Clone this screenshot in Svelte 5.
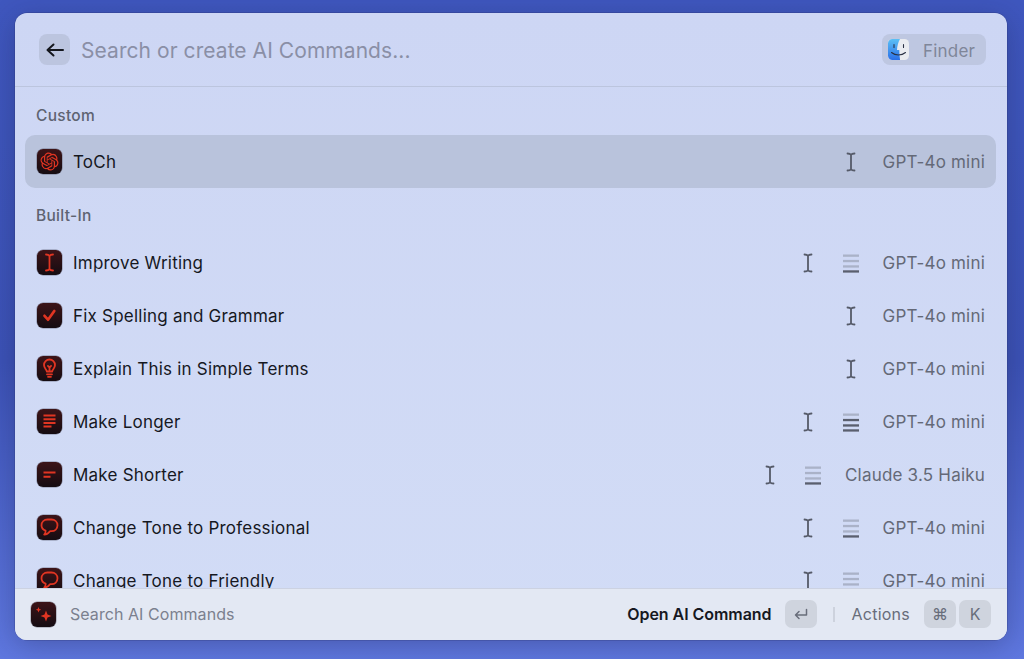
<script lang="ts">
  const custom = [{ title: "ToCh", icon: "openai", input: true, length: "", model: "GPT-4o mini" }];

  const builtIn = [
    { title: "Improve Writing", icon: "cursor", input: true, length: "short", model: "GPT-4o mini" },
    { title: "Fix Spelling and Grammar", icon: "check", input: true, length: "", model: "GPT-4o mini" },
    { title: "Explain This in Simple Terms", icon: "bulb", input: true, length: "", model: "GPT-4o mini" },
    { title: "Make Longer", icon: "long", input: true, length: "long", model: "GPT-4o mini" },
    { title: "Make Shorter", icon: "shorter", input: true, length: "short", model: "Claude 3.5 Haiku" },
    { title: "Change Tone to Professional", icon: "bubble", input: true, length: "short", model: "GPT-4o mini" },
    { title: "Change Tone to Friendly", icon: "bubble", input: true, length: "short", model: "GPT-4o mini" }
  ];

  const openai =
    "M22.2819 9.8211a5.9847 5.9847 0 0 0-.5157-4.9108 6.0462 6.0462 0 0 0-6.5098-2.9A6.0651 6.0651 0 0 0 4.9807 4.1818a5.9847 5.9847 0 0 0-3.9977 2.9 6.0462 6.0462 0 0 0 .7427 7.0966 5.98 5.98 0 0 0 .511 4.9107 6.051 6.051 0 0 0 6.5146 2.9001A5.9847 5.9847 0 0 0 13.2599 24a6.0557 6.0557 0 0 0 5.7718-4.2058 5.9894 5.9894 0 0 0 3.9977-2.9001 6.0557 6.0557 0 0 0-.7475-7.0729zm-9.022 12.6081a4.4755 4.4755 0 0 1-2.8764-1.0408l.1419-.0804 4.7783-2.7582a.7948.7948 0 0 0 .3927-.6813v-6.7369l2.02 1.1686a.071.071 0 0 1 .038.052v5.5826a4.504 4.504 0 0 1-4.4945 4.4944zm-9.6607-4.1254a4.4708 4.4708 0 0 1-.5346-3.0137l.142.0852 4.783 2.7582a.7712.7712 0 0 0 .7806 0l5.8428-3.3685v2.3324a.0804.0804 0 0 1-.0332.0615L9.74 19.9502a4.4992 4.4992 0 0 1-6.1408-1.6464zM2.3408 7.8956a4.485 4.485 0 0 1 2.3655-1.9728V11.6a.7664.7664 0 0 0 .3879.6765l5.8144 3.3543-2.0201 1.1685a.0757.0757 0 0 1-.071 0l-4.8303-2.7865A4.504 4.504 0 0 1 2.3408 7.872zm16.5963 3.8558L13.1038 8.364 15.1192 7.2a.0757.0757 0 0 1 .071 0l4.8303 2.7913a4.4944 4.4944 0 0 1-.6765 8.1042v-5.6772a.79.79 0 0 0-.407-.667zm2.0107-3.0231l-.142-.0852-4.7735-2.7818a.7759.7759 0 0 0-.7854 0L9.409 9.2297V6.8974a.0662.0662 0 0 1 .0284-.0615l4.8303-2.7866a4.4992 4.4992 0 0 1 6.6802 4.66zM8.3065 12.863l-2.02-1.1638a.0804.0804 0 0 1-.038-.0567V6.0742a4.4992 4.4992 0 0 1 7.3757-3.4537l-.142.0805L8.704 5.459a.7948.7948 0 0 0-.3927.6813zm1.0976-2.3654l2.602-1.4998 2.6069 1.4998v2.9994l-2.5974 1.4997-2.6067-1.4997Z";
</script>

{#snippet appIcon(name: string)}
  <span class="app-icon">
    <svg viewBox="0 0 25 25" width="25" height="25">
      {#if name === "openai"}
        <g transform="translate(3.5 3.5) scale(0.75)"><path d={openai} class="fill" /></g>
      {:else if name === "cursor"}
        <path d="M9 4.500c1.500 0 2.800.4 3.500 1.500.7-1.100 2-1.500 3.500-1.500M9 20.500c1.500 0 2.800-.4 3.500-1.500.7 1.100 2 1.500 3.500 1.500M12.500 6v13" class="line bold" />
      {:else if name === "check"}
        <path d="M7.500 12.800l3.500 3.900L17.300 8" class="line heavy" />
      {:else if name === "bulb"}
        <path d="M9.800 15.500c0-2-2.800-3-2.800-6.500a5.500 5.500 0 0 1 11 0c0 3.500-2.800 4.500-2.800 6.500zM10 18.300h5M11 20.800h3M12.500 15.500v-4l-1.600-1.600M12.500 11.500l1.600-1.600" class="line bold" />
      {:else if name === "long"}
        <path d="M6.500 6.500h12M6.500 10.200h12M6.500 13.900h12M6.500 17.600h8" class="line thick" />
      {:else if name === "shorter"}
        <path d="M6.500 10.500h12M6.500 14.800h7" class="line thick" />
      {:else if name === "bubble"}
        <path d="M10.500 4.500h4c3.300 0 6 2.300 6 5.800s-2.700 5.900-6 5.900h-1.500c-1.400 2-3.300 3.200-5.800 3.500 1.100-1.100 1.600-2.500 1.400-4.100C6 14.800 4.500 12.800 4.500 10.300c0-3.500 2.700-5.800 6-5.800z" class="line bold" />
      {:else if name === "sparkle"}
        <path d="M15 8.500l1.500 4 4 1.500-4 1.500-1.500 4-1.500-4-4-1.500 4-1.500zM7.500 5l.8 2 2 .8-2 .8-.8 2-.8-2-2-.8 2-.8z" class="fill" />
      {/if}
    </svg>
  </span>
{/snippet}

{#snippet rowItem(item: (typeof builtIn)[number], selected: boolean)}
  <li class="row" class:selected>
    {@render appIcon(item.icon)}
    <span class="title">{item.title}</span>
    <span class="params">
      {#if item.input}
        <svg class="beam" viewBox="0 0 18 20" width="18" height="20">
          <path d="M5.500 1.500c1.600 0 2.800.3 3.500 1.300.7-1 1.900-1.300 3.500-1.300M5.500 18.500c1.600 0 2.800-.3 3.500-1.300.7 1 1.900 1.300 3.500 1.300M9 3v14" />
        </svg>
      {/if}
      {#if item.length}
        <svg class="bars" class:long={item.length === "long"} viewBox="0 0 18 20" width="18" height="20">
          <rect class="bar" x="1" y="1.500" width="16" height="2.300" />
          <rect class="bar two" x="1" y="6.900" width="16" height="2.300" />
          <rect class="bar three" x="1" y="12.300" width="16" height="2.300" />
          <rect class="bar dark" x="1" y="17.300" width="16" height="2.300" />
        </svg>
      {/if}
    </span>
    <span class="model">{item.model}</span>
  </li>
{/snippet}

<div class="desktop">
  <div class="window">
    <header class="search">
      <button class="back" type="button" aria-label="Back">
        <svg viewBox="0 0 18 18" width="18" height="18">
          <path d="M17 9H1.500M7.500 3.500L1.500 9l6 5.500" />
        </svg>
      </button>
      <span class="placeholder">Search or create AI Commands...</span>
      <span class="context">
        <svg class="finder" viewBox="0 0 21 21" width="21" height="21">
          <defs>
            <linearGradient id="finder-blue" x1="0" y1="0" x2="0" y2="1">
              <stop offset="0" stop-color="#5cc0f5" />
              <stop offset="1" stop-color="#2a6fe8" />
            </linearGradient>
          </defs>
          <rect width="21" height="21" rx="4.500" fill="#e9ebf0" />
          <path d="M4.500 0H12c-1.800 3.300-2.800 6.800-3 11h2.300c0 3.200.2 6.500.8 10H4.500A4.500 4.500 0 0 1 0 16.500v-12A4.500 4.500 0 0 1 4.500 0z" fill="url(#finder-blue)" />
          <path d="M6 5.500v3M15.500 5.500v3" class="face" />
          <path d="M3.500 13.500c4 3.300 10 3.300 14 0" class="face" />
        </svg>
        <span>Finder</span>
      </span>
    </header>

    <div class="list">
      <h2 class="first">Custom</h2>
      <ul>
        {#each custom as item}
          {@render rowItem(item, true)}
        {/each}
      </ul>
      <h2>Built-In</h2>
      <ul>
        {#each builtIn as item}
          {@render rowItem(item, false)}
        {/each}
      </ul>
    </div>

    <footer class="bar-bottom">
      {@render appIcon("sparkle")}
      <span class="hint">Search AI Commands</span>
      <strong>Open AI Command</strong>
      <kbd class="enter">
        <svg viewBox="0 0 16 14" width="16" height="14">
          <path d="M13.500 2.500v5.500H2.500M6 4.500L2.500 8 6 11.500" />
        </svg>
      </kbd>
      <span class="sep"></span>
      <span class="actions">Actions</span>
      <span class="keys">
        <kbd>⌘</kbd>
        <kbd>K</kbd>
      </span>
    </footer>
  </div>
</div>

<style>
  :global(body) { margin: 0; }

  .desktop {
    height: 659px;
    padding: 13px 17px 19px 15px;
    box-sizing: border-box;
    overflow: hidden;
    font-family: Inter, "Noto Sans", sans-serif;
    background: linear-gradient(180deg, #3f57be 0%, #3c52b6 55%, #5f78e0 100%);
  }

  .window {
    height: 627px;
    display: flex;
    flex-direction: column;
    overflow: hidden;
    border-radius: 12px;
    background: linear-gradient(180deg, #cdd6f4 0%, #d2dcf6 100%);
    box-shadow: 0 0 0 0.5px rgba(40, 50, 110, 0.5), 0 6px 28px rgba(25, 30, 70, 0.3);
  }

  .search {
    flex: none;
    height: 73px;
    display: flex;
    align-items: center;
    padding: 0 21px 0 24px;
    border-bottom: 1px solid #bcc5de;
    box-sizing: content-box;
  }
  .back {
    width: 31px;
    height: 31px;
    padding: 0;
    display: grid;
    place-items: center;
    border: 0;
    border-radius: 8px;
    background: #bcc5df;
  }
  .back path {
    fill: none;
    stroke: #14161c;
    stroke-width: 2;
    stroke-linecap: round;
    stroke-linejoin: round;
  }
  .placeholder {
    margin-left: 11px;
    padding-top: 1px;
    flex: 1;
    font-size: 21px;
    letter-spacing: 0.06px;
    color: #8a8fa6;
  }
  .context {
    width: 104px;
    height: 31px;
    box-sizing: border-box;
    padding-left: 6px;
    display: flex;
    align-items: center;
    gap: 14px;
    border-radius: 8px;
    background: #bec7e1;
    font-size: 17px;
    letter-spacing: 0.2px;
    color: #7f8699;
  }
  .context span { padding-top: 2px; }
  .finder { flex: none; }
  .face {
    fill: none;
    stroke: #2a3144;
    stroke-width: 1.100;
    stroke-linecap: round;
  }

  .list {
    flex: 1;
    min-height: 0;
    overflow: hidden;
    padding: 0 11px 0 10px;
  }
  h2 {
    margin: 0;
    height: 48px;
    box-sizing: border-box;
    padding: 18px 0 0 11px;
    font-size: 15.500px;
    line-height: 20px;
    letter-spacing: 0.3px;
    font-weight: 500;
    color: #5e6371;
  }
  h2.first { padding-top: 19px; }
  ul {
    margin: 0;
    padding: 0;
    list-style: none;
  }
  .row {
    height: 53px;
    display: flex;
    align-items: center;
    padding: 0 11px 0 12px;
    border-radius: 10px;
  }
  .row.selected { background: #b9c3dc; }
  .title {
    flex: 1;
    margin-left: 11px;
    font-size: 17px;
    letter-spacing: 0.22px;
    color: #16181f;
  }
  .params {
    display: flex;
    gap: 25px;
    align-items: center;
  }
  .beam path {
    fill: none;
    stroke: #555a68;
    stroke-width: 1.800;
    stroke-linecap: round;
  }
  .bar { fill: #aab2c8; }
  .bar.dark { fill: #5a5f6e; }
  .bars.long .two, .bars.long .three { fill: #5a5f6e; }
  .model {
    margin-left: 23px;
    font-size: 17px;
    letter-spacing: 0.2px;
    color: #646977;
  }

  .app-icon {
    flex: none;
    width: 25px;
    height: 25px;
    display: block;
    border-radius: 6px;
    background: linear-gradient(180deg, #3c1418 0%, #150c12 100%);
    box-shadow: 0 0 0 0.5px rgba(30, 30, 50, 0.45);
  }
  .app-icon svg { display: block; }
  .fill { fill: #e03522; }
  .line {
    fill: none;
    stroke: #e03522;
    stroke-width: 1.500;
    stroke-linecap: round;
    stroke-linejoin: round;
  }
  .line.bold { stroke-width: 1.800; }
  .line.heavy { stroke-width: 2.700; }
  .line.thick { stroke-width: 2; stroke-linecap: butt; }

  .bar-bottom {
    flex: none;
    height: 52px;
    box-sizing: border-box;
    display: flex;
    align-items: center;
    padding: 0 16px 1px;
    border-top: 1px solid #ccd2e2;
    background: #e3e8f3;
    font-size: 16px;
  }
  .hint {
    flex: 1;
    margin-left: 14px;
    letter-spacing: 0.06px;
    color: #7b808e;
  }
  strong {
    font-weight: 600;
    letter-spacing: -0.05px;
    color: #16181f;
  }
  kbd {
    width: 32px;
    height: 28px;
    display: grid;
    place-items: center;
    border-radius: 7px;
    background: #cfd4de;
    font-family: Inter, "DejaVu Sans", sans-serif;
    font-size: 16px;
    color: #686d7a;
  }
  .enter { margin-left: 14px; }
  .enter path {
    fill: none;
    stroke: #686d7a;
    stroke-width: 1.500;
    stroke-linecap: round;
    stroke-linejoin: round;
  }
  .sep {
    width: 2px;
    height: 15px;
    margin: 0 16px;
    background: #cdd2dd;
  }
  .actions {
    letter-spacing: 0.25px;
    color: #686d7a;
  }
  .keys {
    margin-left: 14px;
    display: flex;
    gap: 3px;
  }
</style>
